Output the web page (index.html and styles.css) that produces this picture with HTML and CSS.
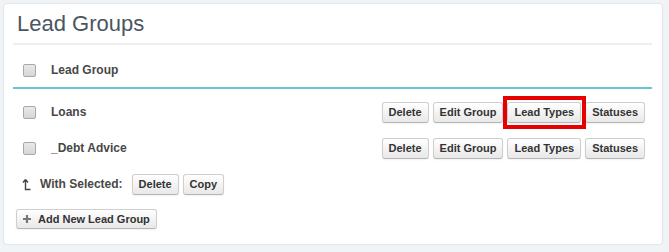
FILE: index.html
```html
<!DOCTYPE html>
<html>
<head>
<meta charset="utf-8">
<link rel="stylesheet" href="styles.css">
</head>
<body>
<div class="panel">
  <h2 class="title">Lead Groups</h2>
  <div class="grid">
    <div class="row head">
      <input type="checkbox" class="cb">
      <span class="label">Lead Group</span>
    </div>
    <div class="rows">
      <div class="row">
        <input type="checkbox" class="cb">
        <span class="label">Loans</span>
        <div class="actions">
          <button class="btn">Delete</button>
          <button class="btn">Edit Group</button>
          <span class="mark"><button class="btn">Lead Types</button><span class="highlight"></span></span>
          <button class="btn">Statuses</button>
        </div>
      </div>
      <div class="row">
        <input type="checkbox" class="cb">
        <span class="label">_Debt Advice</span>
        <div class="actions">
          <button class="btn">Delete</button>
          <button class="btn">Edit Group</button>
          <button class="btn">Lead Types</button>
          <button class="btn">Statuses</button>
        </div>
      </div>
      <div class="row selected">
        <svg class="arrow" width="9" height="13" viewBox="0 0 9 13"><path d="M3.5 1.5 V11.5 H8.5 M3.5 1.5 L1 4.5 M3.5 1.5 L6 4.5" fill="none" stroke="#444" stroke-width="1.4"/></svg>
        <span class="label sel-label">With Selected:</span>
        <div class="sel-actions">
          <button class="btn">Delete</button>
          <button class="btn">Copy</button>
        </div>
      </div>
    </div>
  </div>
  <button class="btn add"><svg class="plus" width="8" height="8" viewBox="0 0 8 8"><path d="M4 0 V8 M0 4 H8" stroke="#777" stroke-width="2.2"/></svg>Add New Lead Group</button>
</div>
</body>
</html>
```
FILE: styles.css
```css
html, body {
  margin: 0;
  padding: 0;
  background: #f1f4f7;
}
body {
  font-family: "Liberation Sans", Arial, sans-serif;
}
.panel {
  margin: 3px 6px 0 3px;
  height: 242px;
  box-sizing: border-box;
  background: #fff;
  border: 1px solid #e2e7eb;
  border-radius: 4px;
  box-shadow: 0 1px 1px rgba(0,0,0,0.04);
  padding: 7px 10px 0 9px;
}
.title {
  margin: 0;
  font-size: 22px;
  line-height: 26px;
  font-weight: normal;
  color: #4b5661;
  padding: 0 0 6px 4px;
  border-bottom: 2px solid #eeeeee;
}
.row {
  display: flex;
  align-items: center;
  height: 36px;
  padding: 0 7px 0 10px;
}
.row.head {
  height: 34px;
  padding-top: 8px;
  border-bottom: 2px solid #6cc3d6;
}
.rows {
  padding-top: 5px;
}
.cb {
  appearance: none;
  -webkit-appearance: none;
  margin: 0;
  width: 13px;
  height: 13px;
  box-sizing: border-box;
  border: 1px solid #a8a8a8;
  border-radius: 2px;
  background: linear-gradient(#e9e9e9, #d6d6d6);
  flex: none;
}
.label {
  margin-left: 15px;
  font-size: 12px;
  font-weight: bold;
  color: #484848;
}
.actions {
  margin-left: auto;
  display: flex;
  gap: 4px;
}
.btn {
  font-family: "Liberation Sans", Arial, sans-serif;
  font-size: 11px;
  font-weight: bold;
  color: #333;
  height: 21px;
  padding: 0 6px;
  margin: 0;
  box-sizing: border-box;
  background: linear-gradient(#ffffff, #e8e8e8);
  border: 1px solid #cfcfcf;
  border-bottom-color: #b5b5b5;
  border-radius: 3px;
  box-shadow: 0 1px 2px rgba(0,0,0,0.06);
  display: inline-flex;
  align-items: center;
}
.mark {
  position: relative;
  display: inline-flex;
}
.highlight {
  position: absolute;
  left: -4px;
  top: -6px;
  right: -5px;
  bottom: -6px;
  border: 4px solid #e60000;
  box-sizing: border-box;
  pointer-events: none;
}
.arrow {
  flex: none;
  margin-left: -1px;
}
.sel-label {
  margin-left: 9px;
}
.sel-actions {
  display: flex;
  gap: 4px;
  margin-left: 9px;
}
.add {
  margin: 7px 0 0 3px;
  height: 20px;
  gap: 7px;
}
.plus {
  flex: none;
}
```
